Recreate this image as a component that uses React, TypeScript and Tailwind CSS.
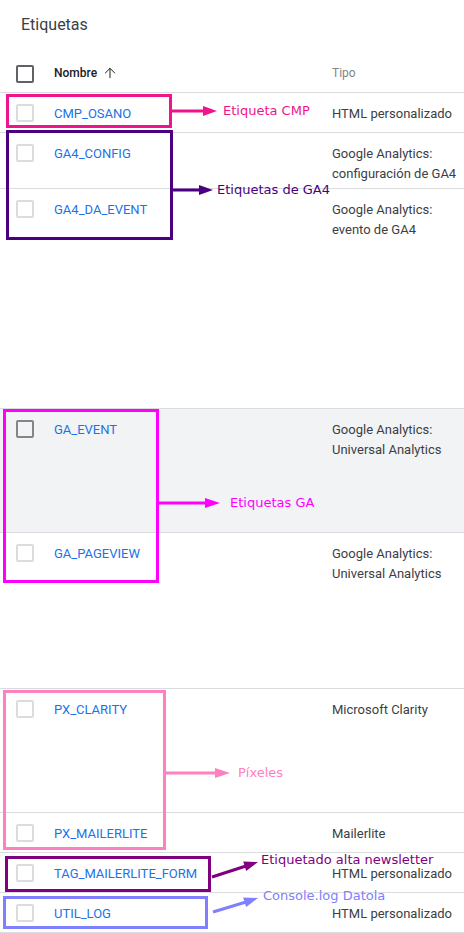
// Etiquetas — lista de etiquetas GTM con anotaciones
import { ArrowUp } from "lucide-react";

interface TagRow {
  name: string;
  tipo: string[];
  h: string;
  hovered?: boolean;
}

const ROWS: TagRow[] = [
  { name: "CMP_OSANO", tipo: ["HTML personalizado"], h: "h-[40px]" },
  { name: "GA4_CONFIG", tipo: ["Google Analytics:", "configuración de GA4"], h: "h-[56px]" },
  { name: "GA4_DA_EVENT", tipo: ["Google Analytics:", "evento de GA4"], h: "h-[220px]" },
  { name: "GA_EVENT", tipo: ["Google Analytics:", "Universal Analytics"], h: "h-[124px]", hovered: true },
  { name: "GA_PAGEVIEW", tipo: ["Google Analytics:", "Universal Analytics"], h: "h-[156px]" },
  { name: "PX_CLARITY", tipo: ["Microsoft Clarity"], h: "h-[124px]" },
  { name: "PX_MAILERLITE", tipo: ["Mailerlite"], h: "h-[40px]" },
  { name: "TAG_MAILERLITE_FORM", tipo: ["HTML personalizado"], h: "h-[40px]" },
  { name: "UTIL_LOG", tipo: ["HTML personalizado"], h: "h-[40px]" },
];

const NOTE_FONT = "text-[13px] leading-[18px] font-['DejaVu_Sans',Verdana,sans-serif]";

export default function App() {
  return (
    <div className="relative w-[464px] h-[933px] overflow-hidden bg-white font-['Roboto','Liberation_Sans',sans-serif]">
      <div className="h-[53px] pl-[21px] pt-[14px] text-[16px] leading-[22px] text-[#3c4043]">Etiquetas</div>

      {/* cabecera */}
      <div className="flex items-center h-[40px] border-b border-[#dadce0]">
        <div className="w-[54px] pl-4 pt-[2px]">
          <div className="w-[18px] h-[18px] border-2 border-[#5f6368] rounded-[2px]" />
        </div>
        <div className="w-[278px] flex items-center gap-[5px] text-[12px] font-medium text-[#202124]">
          Nombre
          <ArrowUp size={16} strokeWidth={1.5} className="text-[#202124]" />
        </div>
        <div className="flex-1 text-[12px] text-[#80868b]">Tipo</div>
      </div>

      {ROWS.map((r) => (
        <div
          key={r.name}
          className={`flex items-start pt-[11px] border-b border-[#dadce0] ${r.h} ${r.hovered ? "bg-[#f1f3f4]" : "bg-white"}`}
        >
          <div className="w-[54px] pl-4">
            <div
              className={`w-[18px] h-[18px] border-2 rounded-[2px] ${r.hovered ? "border-[#80868b]" : "border-[#dadce0]"}`}
            />
          </div>
          <div className="w-[278px] text-[13px] leading-[20px] text-[#1a73e8]">{r.name}</div>
          <div className="flex-1 whitespace-nowrap text-[13px] leading-[20px] text-[#3c4043]">
            {r.tipo.map((t) => (
              <div key={t}>{t}</div>
            ))}
          </div>
        </div>
      ))}

      {/* anotaciones */}
      <div className="absolute left-[6px] top-[94px] w-[166px] h-[34px] border-[3px] border-[#f0148c]" />
      <div className="absolute left-[6px] top-[130px] w-[167px] h-[110px] border-[3px] border-[#4b0082]" />
      <div className="absolute left-[3px] top-[409px] w-[156px] h-[174px] border-[3px] border-[#ff00ff]" />
      <div className="absolute left-[3px] top-[690px] w-[163px] h-[160px] border-[3px] border-[#ff80c0]" />
      <div className="absolute left-[5px] top-[856px] w-[206px] h-[36px] border-[3px] border-[#800080]" />
      <div className="absolute left-[3px] top-[896px] w-[205px] h-[33px] border-[3px] border-[#8080ff]" />

      <svg className="absolute left-0 top-0" width="464" height="933" viewBox="0 0 464 933">
        <line x1="171" y1="111" x2="205" y2="111" stroke="#f0148c" strokeWidth="3" />
        <polygon points="203,106 217,111 203,116" fill="#f0148c" />
        <line x1="172" y1="190" x2="200" y2="190" stroke="#4b0082" strokeWidth="3" />
        <polygon points="199,185 213,190 199,195" fill="#4b0082" />
        <line x1="159" y1="503" x2="207" y2="503" stroke="#ff00ff" strokeWidth="3" />
        <polygon points="205,498 220,503 205,508" fill="#ff00ff" />
        <line x1="165" y1="773" x2="217" y2="773" stroke="#ff80c0" strokeWidth="3" />
        <polygon points="215,768 230,773 215,778" fill="#ff80c0" />
        <line x1="212" y1="877" x2="246" y2="866" stroke="#800080" strokeWidth="3" />
        <polygon points="258,862 246.2,871.1 243.2,861.6" fill="#800080" />
        <line x1="213" y1="912" x2="246" y2="902" stroke="#8080ff" strokeWidth="3" />
        <polygon points="258,898 246.1,907 243.1,897.4" fill="#8080ff" />
      </svg>

      <span className={`absolute left-[223px] top-[102px] text-[#f0148c] ${NOTE_FONT}`}>Etiqueta CMP</span>
      <span className={`absolute left-[217px] top-[181px] text-[#4b0082] ${NOTE_FONT}`}>Etiquetas de GA4</span>
      <span className={`absolute left-[230px] top-[494px] text-[#ff00ff] ${NOTE_FONT}`}>Etiquetas GA</span>
      <span className={`absolute left-[238px] top-[764px] text-[#ff80c0] ${NOTE_FONT}`}>Píxeles</span>
      <span className={`absolute left-[261px] top-[851px] text-[#800080] ${NOTE_FONT}`}>Etiquetado alta newsletter</span>
      <span className={`absolute left-[263px] top-[887px] text-[#8080ff] ${NOTE_FONT}`}>Console.log Datola</span>
    </div>
  );
}
